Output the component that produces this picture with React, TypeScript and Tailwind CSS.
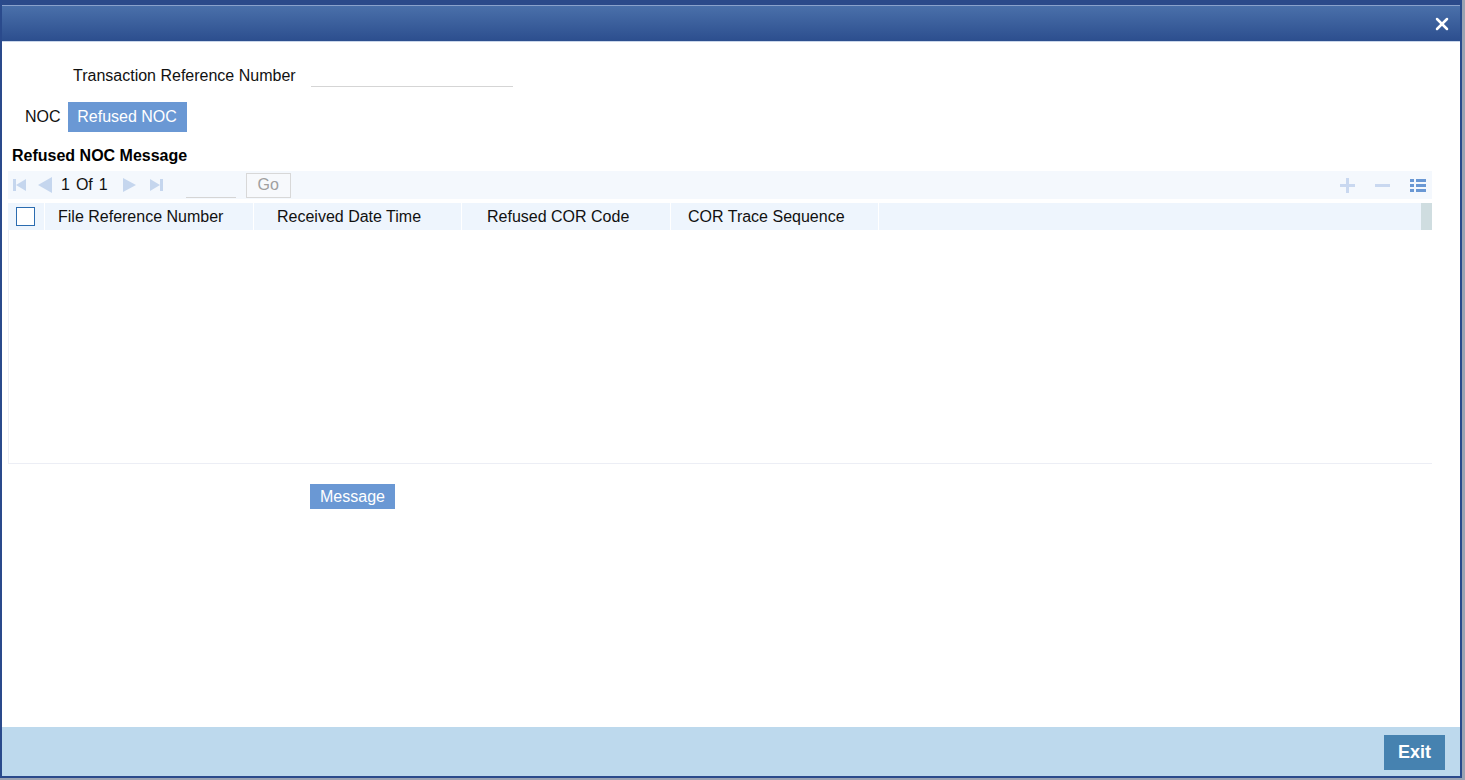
import { X } from "lucide-react";

const columns = [
  { label: "File Reference Number", cls: "w-[209px] pl-[13px]" },
  { label: "Received Date Time", cls: "w-[208px] pl-[23px]" },
  { label: "Refused COR Code", cls: "w-[209px] pl-[25px]" },
  { label: "COR Trace Sequence", cls: "w-[208px] pl-[17px]" },
];

function NavIcon({ dir, bar }: { dir: "left" | "right"; bar?: boolean }) {
  return (
    <svg width="15" height="16" viewBox="0 0 15 16" className="text-[#c5d6ee]">
      {dir === "left" ? (
        <>
          {bar && <rect x="1" y="2" width="3" height="12" fill="currentColor" />}
          <polygon points={bar ? "14,2 14,14 4,8" : "15,0 15,16 1,8"} fill="currentColor" />
        </>
      ) : (
        <>
          <polygon points={bar ? "1,2 1,14 11,8" : "0,1 0,15 13,8"} fill="currentColor" />
          {bar && <rect x="11" y="2" width="3" height="12" fill="currentColor" />}
        </>
      )}
    </svg>
  );
}

export default function App() {
  return (
    <div
      className="h-[780px] w-[1465px] bg-[#9aa3b3]"
      style={{ fontFamily: '"Liberation Sans", Arial, sans-serif' }}
    >
      <div className="flex h-[778px] w-[1462px] flex-col border-x-2 border-b-2 border-[#2a4a8c] bg-white">
        {/* title bar */}
        <div className="flex h-[42px] flex-col bg-[#2b4a8a]">
          <div className="h-[5px] bg-[#2b4a8a]" />
          <div className="h-px bg-[#8aa2cc]" />
          <div className="flex flex-1 items-center justify-end bg-[linear-gradient(#4a70aa,#2c4e8e)] pr-2">
            <X className="h-5 w-5 text-white" strokeWidth={3} />
          </div>
          <div className="h-px bg-[#c9d6ea]" />
        </div>

        {/* content */}
        <div className="flex flex-1 flex-col">
          <div className="mt-[20px] flex items-end pl-[71px]">
            <span className="text-[16px] leading-[22px] text-[#111]">Transaction Reference Number</span>
            <div className="ml-[15px] h-[25px] w-[202px] border-b border-[#d5d5d5]" />
          </div>

          <div className="mt-[15px] flex items-center pl-[23px] text-[16px]">
            <span className="pr-[7px] text-[#111]">NOC</span>
            <span className="flex h-[30px] w-[119px] items-center justify-center bg-[#6a98d4] text-white">
              Refused NOC
            </span>
          </div>

          <div className="mt-[14px] pl-[10px] text-[16px] font-bold leading-[19px] text-black">
            Refused NOC Message
          </div>

          <div className="ml-[6px] mr-[28px] mt-[6px] flex h-[293px] flex-col border-b border-[#eceef5]">
            {/* toolbar */}
            <div className="flex h-[28px] items-center bg-[#f4f8fd] pl-[4px] pr-[6px]">
              <NavIcon dir="left" bar />
              <span className="ml-[10px]" />
              <NavIcon dir="left" />
              <span className="ml-[9px] text-[16px] text-[#111]">1</span>
              <span className="ml-[6px] text-[16px] text-[#111]">Of</span>
              <span className="ml-[6px] text-[16px] text-[#111]">1</span>
              <span className="ml-[15px]" />
              <NavIcon dir="right" />
              <span className="ml-[11px]" />
              <NavIcon dir="right" bar />
              <div className="ml-[22px] h-[27px] w-[50px] self-start border-b border-[#d5d5d5]" />
              <div className="ml-[10px] flex h-[25px] w-[45px] items-center justify-center border border-[#d8d8d8] bg-[#f7f9fc] text-[16px] text-[#a0a0a0]">
                Go
              </div>
              <div className="ml-auto flex items-center gap-[20px]">
                <svg width="15" height="15" viewBox="0 0 15 15">
                  <rect x="6" y="0" width="3" height="15" fill="#c9d8f0" />
                  <rect x="0" y="6" width="15" height="3" fill="#c9d8f0" />
                </svg>
                <svg width="15" height="15" viewBox="0 0 15 15">
                  <rect x="0" y="6" width="15" height="3" fill="#c9d8f0" />
                </svg>
                <svg width="16" height="15" viewBox="0 0 16 15">
                  <rect x="0" y="1" width="4" height="3" fill="#6a98d4" />
                  <rect x="6" y="1" width="10" height="3" fill="#6a98d4" />
                  <rect x="0" y="6" width="4" height="3" fill="#6a98d4" />
                  <rect x="6" y="6" width="10" height="3" fill="#6a98d4" />
                  <rect x="0" y="11" width="4" height="3" fill="#6a98d4" />
                  <rect x="6" y="11" width="10" height="3" fill="#6a98d4" />
                </svg>
              </div>
            </div>

            {/* header row */}
            <div className="mt-[4px] flex h-[27px] bg-[#eef5fd] pl-[2px]">
              <div className="flex w-[35px] items-center border-r border-white pl-[6px]">
                <div className="h-[19px] w-[19px] border border-[#2b6cb0] bg-white" />
              </div>
              {columns.map((col) => (
                <div
                  key={col.label}
                  className={`${col.cls} flex items-center border-r border-white text-[16px] text-[#111]`}
                >
                  {col.label}
                </div>
              ))}
              <div className="flex-1" />
              <div className="w-[11px] bg-[#cfdde0]" />
            </div>
            <div className="flex-1 border-l border-[#eceef5]" />
          </div>

          <div className="mt-[20px] pl-[308px]">
            <div className="flex h-[25px] w-[85px] items-center justify-center bg-[#6a98d4] text-[16px] text-white">
              Message
            </div>
          </div>

          <div className="flex-1" />

          {/* footer */}
          <div className="flex h-[49px] items-start justify-end bg-[#bdd9ed] pr-[15px] pt-[8px]">
            <div className="flex h-[35px] w-[61px] items-center justify-center bg-[#4682b0] text-[18px] font-bold text-white">
              Exit
            </div>
          </div>
        </div>
      </div>
    </div>
  );
}
